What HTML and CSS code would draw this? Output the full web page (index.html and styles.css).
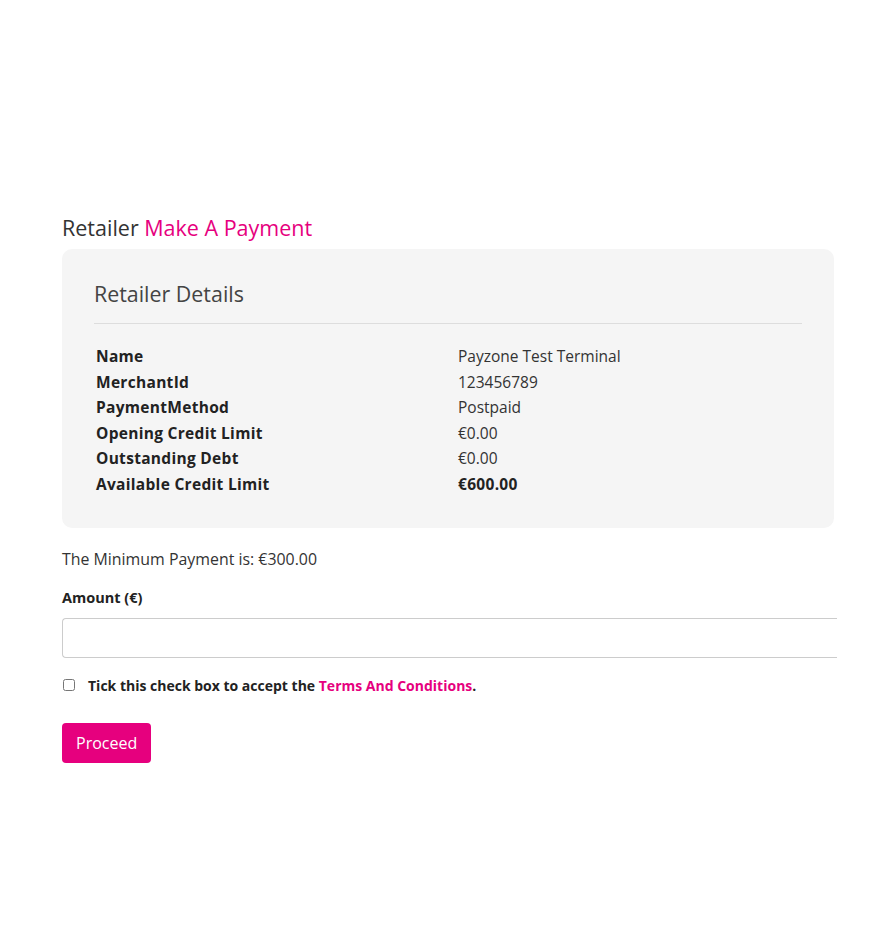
FILE: index.html
```html
<!DOCTYPE html>
<html lang="en">
<head>
    <meta charset="UTF-8">
    <title>Retailer Make A Payment</title>
    <link rel="stylesheet" href="styles.css">
</head>
<body>
    <div class="page">
        <h3 class="page_title">Retailer <span class="pink">Make A Payment</span></h3>

        <div class="card">
            <h4 class="card_title">Retailer Details</h4>
            <hr class="card_line">
            <table class="details">
                <tr><th>Name</th><td>Payzone Test Terminal</td></tr>
                <tr><th>MerchantId</th><td>123456789</td></tr>
                <tr><th>PaymentMethod</th><td>Postpaid</td></tr>
                <tr><th>Opening Credit Limit</th><td>€0.00</td></tr>
                <tr><th>Outstanding Debt</th><td>€0.00</td></tr>
                <tr><th>Available Credit Limit</th><td><b>€600.00</b></td></tr>
            </table>
        </div>

        <p class="min_payment">The Minimum Payment is: €300.00</p>

        <form id="form_payment">
            <label for="amount" class="label">Amount (€)</label>
            <input id="amount" class="input" name="amount">

            <div class="terms">
                <input type="checkbox" id="accept" class="check">
                <label for="accept">Tick this check box to accept the <a href="#" class="pink">Terms And Conditions</a>.</label>
            </div>

            <button id="button" type="button">Proceed</button>
        </form>
    </div>
</body>
</html>
```

FILE: styles.css
```css
body{
    margin: 0;
    background: #fff;
    color: #333;
    font-family: "Open Sans", "Noto Sans", sans-serif;
}
.page{
    width: 772px;
    margin-left: 62px;
    padding-top: 214px;
}
.pink{
    color: #e6007e;
    text-decoration: none;
}
.page_title{
    margin: 0 0 7px 0;
    font-size: 21.5px;
    font-weight: 400;
    line-height: 28px;
}
.card{
    background: #f5f5f5;
    border-radius: 10px;
    padding: 30px 32px 30px 32px;
}
.card_title{
    margin: 0;
    font-size: 21.4px;
    font-weight: 400;
    line-height: 30px;
    color: #444;
}
.card_line{
    margin: 14px 0 20px 0;
    border: none;
    border-top: 1px solid #ddd;
}
.details{
    border-collapse: collapse;
    font-size: 15.5px;
}
.details th{
    width: 362px;
    padding: 0 0 0 2px;
    text-align: left;
    font-weight: 700;
    letter-spacing: 0.3px;
    line-height: 25.6px;
    color: #222;
}
.details td{
    padding: 0;
    line-height: 25.6px;
}
.details b{
    color: #222;
    letter-spacing: 0.3px;
}
.min_payment{
    margin: 20px 0 0 0;
    font-size: 15.9px;
    line-height: 22px;
}
.label{
    display: block;
    margin-top: 17px;
    font-size: 14.5px;
    font-weight: 700;
    line-height: 22px;
    color: #222;
}
.input{
    display: block;
    box-sizing: border-box;
    width: 775px;
    height: 40px;
    margin-top: 9px;
    border: 1px solid #ccc;
    border-right: none;
    border-radius: 4px 0 0 4px;
    outline: none;
}
.terms{
    display: flex;
    align-items: center;
    margin-top: 18px;
    font-size: 14px;
    font-weight: 700;
    color: #222;
}
.check{
    margin: 0 13px 0 1px;
    width: 12px;
    height: 12px;
}
button{
    cursor: pointer;
    margin-top: 28px;
    height: 40px;
    padding: 0 14px;
    font-family: "Open Sans", sans-serif;
    font-size: 16px;
    color: #fff;
    background: #e6007e;
    border: none;
    border-radius: 4px;
}
```
